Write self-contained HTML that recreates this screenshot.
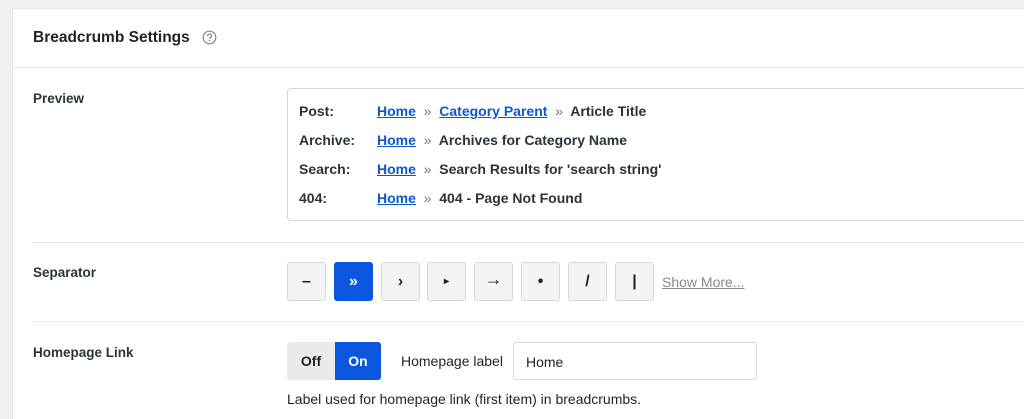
<!DOCTYPE html>
<html><head><style>
html,body{margin:0;width:1024px;height:419px;overflow:hidden}
body{background:#f0f0f1;font-family:"Liberation Sans",sans-serif;color:#1d2327;position:relative}
.card{position:absolute;left:12px;top:8px;width:1011px;height:411px;background:#fff;border:1px solid #e6e6e8;border-right:none;border-bottom:none}
.a{position:absolute;white-space:nowrap}
.h{left:33px;top:29px;font-size:15.5px;font-weight:bold}
.hl{position:absolute;height:1px;background:#e8e8ea}
.lbl{font-size:13.5px;font-weight:bold;color:#2c3338}
.box{left:287px;top:88px;width:737px;height:133px;border:1px solid #d5d6da;border-right:none;border-radius:4px 0 0 4px;box-sizing:border-box}
.r{font-size:14px;font-weight:bold;color:#2c3338}
.r a{color:#0b57d0;text-decoration:underline}
.r .s{color:#777;font-weight:normal}
.b{top:262px;width:39px;height:39px;box-sizing:border-box;border:1px solid #d6d7da;background:#f3f4f6;border-radius:3px;display:flex;align-items:center;justify-content:center;font-size:16px;font-weight:bold;color:#1d2327}
.on{background:#0b57e0;border-color:#0b57e0;color:#fff}
</style></head><body>
<div class="card"></div>
<div class="a h">Breadcrumb Settings</div>
<svg class="a" style="left:202px;top:30px" width="15" height="15" viewBox="0 0 15 15"><circle cx="7.5" cy="7.5" r="6.3" fill="none" stroke="#888" stroke-width="1.2"/><path d="M5.6 6a1.9 1.9 0 1 1 2.6 1.7c-.5.3-.7.6-.7 1.2" fill="none" stroke="#888" stroke-width="1.2"/><circle cx="7.5" cy="10.8" r=".8" fill="#888"/></svg>
<div class="hl" style="left:13px;top:67px;width:1011px"></div>
<div class="a lbl" style="left:33px;top:91px">Preview</div>
<div class="a box"></div>
<div class="a r" style="left:299px;top:103px">Post:</div>
<div class="a r" style="left:377px;top:103px"><a>Home</a> <span class="s">&nbsp;»&nbsp;</span> <a>Category Parent</a> <span class="s">&nbsp;»&nbsp;</span> Article Title</div>
<div class="a r" style="left:299px;top:132px">Archive:</div>
<div class="a r" style="left:377px;top:132px"><a>Home</a> <span class="s">&nbsp;»&nbsp;</span> Archives for Category Name</div>
<div class="a r" style="left:299px;top:161px">Search:</div>
<div class="a r" style="left:377px;top:161px"><a>Home</a> <span class="s">&nbsp;»&nbsp;</span> Search Results for 'search string'</div>
<div class="a r" style="left:299px;top:190px">404:</div>
<div class="a r" style="left:377px;top:190px"><a>Home</a> <span class="s">&nbsp;»&nbsp;</span> 404 - Page Not Found</div>
<div class="hl" style="left:32px;top:242px;width:992px"></div>
<div class="a lbl" style="left:33px;top:265px">Separator</div>
<div class="a b" style="left:287px">–</div>
<div class="a b on" style="left:334px">»</div>
<div class="a b" style="left:381px">›</div>
<div class="a b" style="left:427px;font-size:10px">▸</div>
<div class="a b" style="left:474px;font-size:18px;padding-bottom:5px">→</div>
<div class="a b" style="left:521px">•</div>
<div class="a b" style="left:568px">/</div>
<div class="a b" style="left:615px">|</div>
<div class="a" style="left:662px;top:274px;font-size:14px;color:#888;text-decoration:underline">Show More...</div>
<div class="hl" style="left:32px;top:321px;width:992px"></div>
<div class="a lbl" style="left:33px;top:345px">Homepage Link</div>
<div class="a" style="left:287px;top:342px;width:94px;height:38px;border-radius:3px;overflow:hidden;display:flex;font-size:14px;font-weight:bold">
<div style="width:48px;background:#e9eaec;display:flex;align-items:center;justify-content:center">Off</div>
<div style="flex:1;background:#0b57e0;color:#fff;display:flex;align-items:center;justify-content:center">On</div></div>
<div class="a" style="left:401px;top:353px;font-size:14px">Homepage label</div>
<div class="a" style="left:513px;top:342px;width:244px;height:38px;box-sizing:border-box;border:1px solid #d5d6da;border-radius:3px;padding:11px 0 0 12px;font-size:14px">Home</div>
<div class="a" style="left:287px;top:391px;font-size:14px">Label used for homepage link (first item) in breadcrumbs.</div>
</body></html>
